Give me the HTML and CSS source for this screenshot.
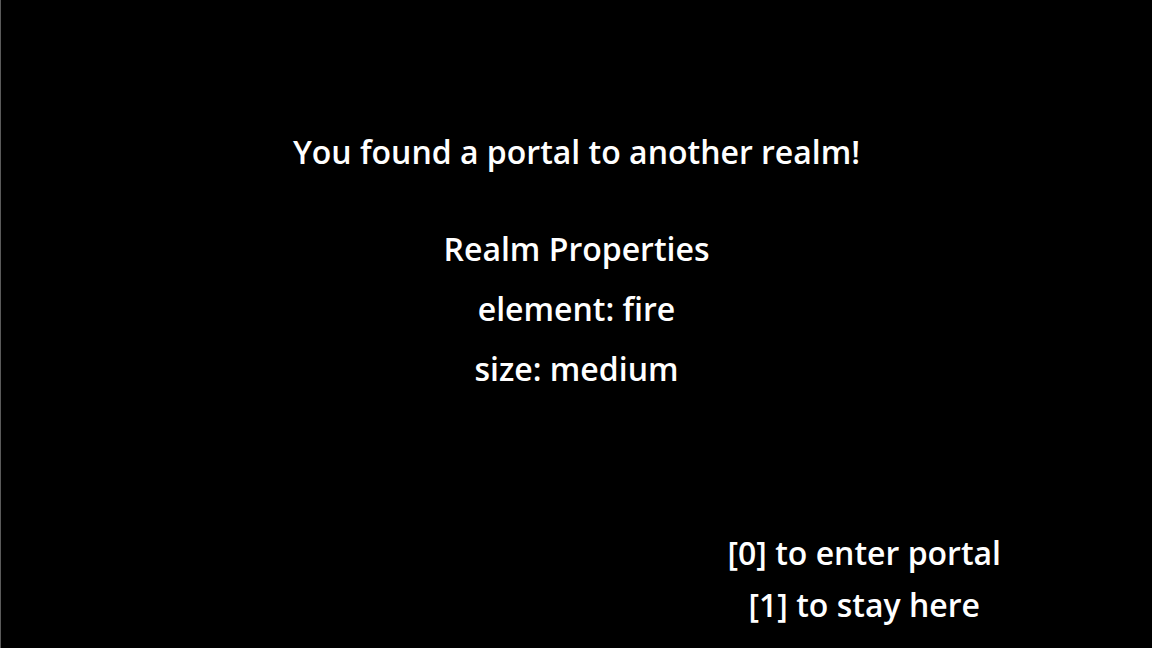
FILE: index.html
```html
<!DOCTYPE html>
<html>
<head>
<meta charset="utf-8">
<link rel="stylesheet" href="styles.css">
</head>
<body>
<main class="screen">
  <h1 class="title">You found a portal to another realm!</h1>
  <section class="props">
    <p class="line">Realm Properties</p>
    <p class="line">element: fire</p>
    <p class="line">size: medium</p>
  </section>
  <div class="spacer"></div>
  <section class="options">
    <div class="half"></div>
    <div class="half choices">
      <p class="choice">[0] to enter portal</p>
      <p class="choice">[1] to stay here</p>
    </div>
  </section>
</main>
</body>
</html>
```

FILE: styles.css
```css
html, body {
  margin: 0;
  padding: 0;
  background: #000;
}
body {
  width: 1152px;
  height: 648px;
  overflow: hidden;
  font-family: "Open Sans", "Noto Sans", sans-serif;
  color: #fff;
}
.screen {
  box-sizing: border-box;
  height: 648px;
  border-left: 1px solid #5a5a5a;
  display: flex;
  flex-direction: column;
  align-items: stretch;
  padding-top: 132px;
  padding-bottom: 17px;
}
.title {
  margin: 0;
  font-size: 32px;
  font-weight: 600;
  line-height: 40px;
  text-align: center;
}
.props {
  margin-top: 47px;
  display: flex;
  flex-direction: column;
  align-items: center;
}
.line {
  margin: 0;
  font-size: 32px;
  font-weight: 600;
  line-height: 60px;
}
.spacer {
  flex: 1;
}
.options {
  display: flex;
}
.half {
  flex: 1;
}
.choices {
  display: flex;
  flex-direction: column;
  align-items: center;
}
.choice {
  margin: 0;
  font-size: 32px;
  font-weight: 600;
  line-height: 52px;
}
```
